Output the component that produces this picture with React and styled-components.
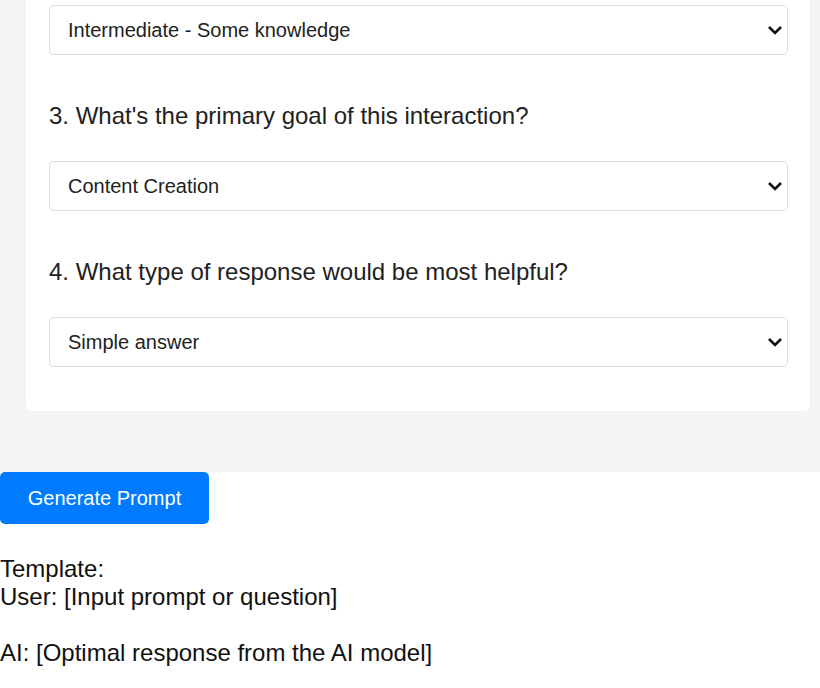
import React from 'react';
import styled, { createGlobalStyle } from 'styled-components';

const GlobalStyle = createGlobalStyle`
  html, body {
    margin: 0;
    padding: 0;
    background: #ffffff;
    font-family: "Liberation Sans", Arial, sans-serif;
    color: #222;
  }
`;

const Section = styled.div`
  background: #f4f4f4;
  padding: 0 10px 61px 26px;
`;

const Card = styled.div`
  background: #ffffff;
  border-radius: 0 0 6px 6px;
  padding: 5px 22px 44px 23px;
  display: flex;
  flex-direction: column;
`;

const Question = styled.div`
  display: flex;
  flex-direction: column;
`;

const Label = styled.label`
  font-size: 24px;
  line-height: 28px;
  color: #222;
  margin: 47px 0 31px;
`;

const SelectWrap = styled.div`
  position: relative;
  height: 50px;
`;

const Select = styled.select`
  appearance: none;
  -webkit-appearance: none;
  box-sizing: border-box;
  width: 100%;
  height: 50px;
  padding: 0 40px 0 18px;
  font-family: "Liberation Sans", Arial, sans-serif;
  font-size: 20px;
  color: #222;
  background: #fff;
  border: 1px solid #dddddd;
  border-radius: 5px;
  outline: none;
`;

const Chevron = styled.svg`
  position: absolute;
  right: 5px;
  top: 20px;
  width: 16px;
  height: 10px;
  pointer-events: none;
`;

const Button = styled.button`
  display: block;
  width: 209px;
  height: 52px;
  padding: 0;
  background: #007bff;
  color: #fff;
  border: none;
  border-radius: 5px;
  font-family: "Liberation Sans", Arial, sans-serif;
  font-size: 20px;
  cursor: pointer;
`;

const Output = styled.pre`
  margin: 31px 0 0;
  font-family: "Liberation Sans", Arial, sans-serif;
  font-size: 24px;
  line-height: 28px;
  color: #111;
  white-space: pre-wrap;
`;

const questions = [
  { label: null, value: 'Intermediate - Some knowledge', options: ['Beginner - No knowledge', 'Intermediate - Some knowledge', 'Expert - Deep knowledge'] },
  { label: "3. What's the primary goal of this interaction?", value: 'Content Creation', options: ['Content Creation', 'Learning', 'Problem Solving'] },
  { label: '4. What type of response would be most helpful?', value: 'Simple answer', options: ['Simple answer', 'Detailed explanation', 'Step-by-step guide'] },
];

export default function App() {
  return (
    <>
      <GlobalStyle />
      <Section>
        <Card>
          {questions.map((q, i) => (
            <Question key={i}>
              {q.label && <Label>{q.label}</Label>}
              <SelectWrap>
                <Select defaultValue={q.value}>
                  {q.options.map((o) => (
                    <option key={o}>{o}</option>
                  ))}
                </Select>
                <Chevron viewBox="0 0 16 10">
                  <polyline points="2,2 8,8 14,2" fill="none" stroke="#111" strokeWidth="2.6" />
                </Chevron>
              </SelectWrap>
            </Question>
          ))}
        </Card>
      </Section>
      <Button>Generate Prompt</Button>
      <Output>{`Template:
User: [Input prompt or question]

AI: [Optimal response from the AI model]`}</Output>
    </>
  );
}
